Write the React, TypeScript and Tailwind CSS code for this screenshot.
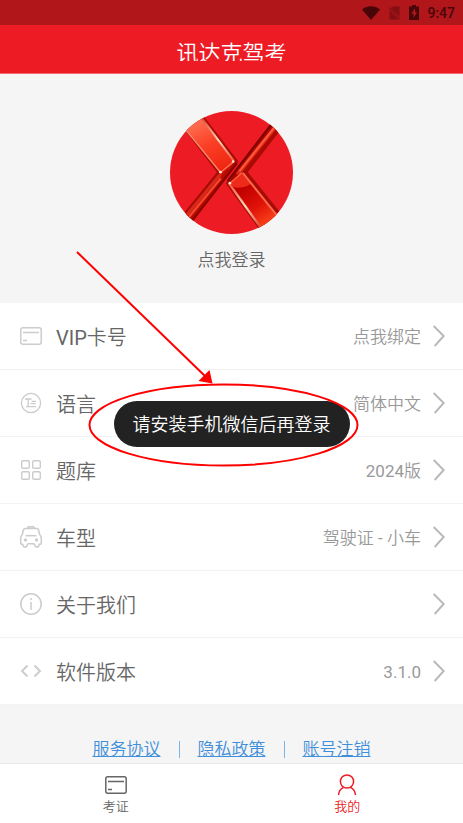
import type { ReactNode } from 'react'

const CardIcon = () => (
  <svg width="22" height="22" viewBox="0 0 22 22" fill="none" stroke="currentColor" strokeWidth="1.5">
    <rect x="0.8" y="2.8" width="20.4" height="16.4" rx="2" />
    <path d="M3 7.500h16M3 15.500h4" />
  </svg>
)

const LanguageIcon = () => (
  <svg width="22" height="22" viewBox="0 0 22 22" fill="none" stroke="currentColor" strokeWidth="1.3">
    <circle cx="11" cy="11" r="9.6" />
    <path d="M5 7h6.500M8.200 7v7M11.500 9.300h4.500M10.500 11.700h5M6 14.700h10" />
  </svg>
)

const GridIcon = () => (
  <svg width="22" height="22" viewBox="0 0 22 22" fill="none" stroke="currentColor" strokeWidth="1.4">
    <rect x="1.7" y="1.7" width="7.6" height="7.6" rx="1.3" />
    <rect x="12.7" y="1.7" width="7.6" height="7.6" rx="1.3" />
    <rect x="1.7" y="12.7" width="7.6" height="7.6" rx="1.3" />
    <rect x="12.7" y="12.7" width="7.6" height="7.6" rx="1.3" />
  </svg>
)

const CarIcon = () => (
  <svg width="22" height="22" viewBox="0 0 22 22" fill="none" stroke="currentColor" strokeWidth="1.5" strokeLinejoin="round">
    <path d="M7.300 2.500L8.300 0.800h5.400l1 1.700h1.800c1.200 0 1.800.500 2.100 1.500l1.100 4.500c1.100 1.200 1.600 2.500 1.600 4v4.800c0 .600-.400 1-1.200 1h-.900c-.200 1.800-.900 2.800-2.200 2.800s-2-.900-2.300-2.300l-.700-1H8l-.700 1c-.300 1.400-1 2.300-2.300 2.300s-2-1-2.200-2.800H1.900c-.800 0-1.200-.400-1.200-1v-4.800c0-1.500.500-2.800 1.600-4L3.400 4c.300-1 .900-1.500 2.100-1.500h11" />
    <path d="M5.500 9.700h11" />
    <circle cx="5.500" cy="14" r="0.900" fill="currentColor" />
    <circle cx="16.500" cy="14" r="0.900" fill="currentColor" />
  </svg>
)

const InfoIcon = () => (
  <svg width="22" height="22" viewBox="0 0 22 22" fill="none" stroke="currentColor" strokeWidth="1.5">
    <circle cx="11" cy="11" r="10.2" />
    <path d="M11 9v8M11 5v2" />
  </svg>
)

const CodeIcon = () => (
  <svg width="22" height="22" viewBox="0 0 22 22" fill="none" stroke="currentColor" strokeWidth="1.9">
    <path d="M7.500 5.500L2 11l5.500 5.500M14.500 5.500L20 11l-5.500 5.500" />
  </svg>
)

const UserIcon = () => (
  <svg width="22" height="22" viewBox="0 0 22 22" fill="none" stroke="currentColor" strokeWidth="1.5">
    <circle cx="11" cy="7.500" r="6.600" />
    <path d="M2.500 21c.3-3.500 2-6 5-7.600M19.500 21c-.3-3.500-2-6-5-7.600" />
  </svg>
)

const Chevron = () => (
  <svg width="12" height="22" viewBox="0 0 12 22" fill="none" stroke="#b8b8b8" strokeWidth="1.9">
    <path d="M0.700 1L10.700 11 1.700 21" />
  </svg>
)

const Logo = () => (
  <svg className="size-[123px] rounded-full" viewBox="29 31 370 370">
    <defs>
      <linearGradient id="upper" gradientUnits="userSpaceOnUse" x1="120" y1="60" x2="190" y2="210">
        <stop offset="0" stopColor="#ff6d50" />
        <stop offset="0.45" stopColor="#fa4026" />
        <stop offset="1" stopColor="#ef2410" />
      </linearGradient>
      <linearGradient id="lower" gradientUnits="userSpaceOnUse" x1="245" y1="265" x2="325" y2="380">
        <stop offset="0" stopColor="#c00000" />
        <stop offset="0.5" stopColor="#e01208" />
        <stop offset="1" stopColor="#ff4a1c" />
      </linearGradient>
      <linearGradient id="shine" gradientUnits="userSpaceOnUse" x1="0" y1="50" x2="0" y2="185">
        <stop offset="0" stopColor="#d73a20" />
        <stop offset="0.5" stopColor="#ffd6bd" />
        <stop offset="1" stopColor="#f4553a" />
      </linearGradient>
      <linearGradient id="shineLow" gradientUnits="userSpaceOnUse" x1="0" y1="250" x2="0" y2="385">
        <stop offset="0" stopColor="#f4553a" />
        <stop offset="0.5" stopColor="#ffd6bd" />
        <stop offset="1" stopColor="#d73a20" />
      </linearGradient>
    </defs>
    <rect x="29" y="31" width="370" height="370" fill="#ed1c24" />
    <g fill="none">
      {/* upper arm with its lower left leg */}
      <path d="M64 76L118 30 235 183 88 372 62 348 170 215Z" fill="#a80c05" />
      <path d="M74 82L121 46 222 182 181 218Z" fill="url(#upper)" />
      <path d="M180 218L222 182 205 212 84 362 68 350Z" fill="#c81208" />
      <path d="M180 222L72 354" stroke="#d8281a" strokeWidth="10" />
      <path d="M206 208L84 360" stroke="#b80c04" strokeWidth="10" />
      <path d="M182 234L78 360" stroke="#f84a2e" strokeWidth="6" />
      <path d="M230 188L90 368" stroke="#8e0500" strokeWidth="7" />
      <path d="M70 80L181 216" stroke="#ff8a6a" strokeWidth="4" />
      <path d="M117 42L221 181" stroke="url(#shine)" strokeWidth="6" />
      <path d="M181 216L220 184" stroke="#ff7255" strokeWidth="4" />

      {/* lower arm with its upper right leg */}
      <path d="M197 249L338 62 366 82 263 215 368 345 308 402Z" fill="#a80c05" />
      <path d="M207 248L246 216 356 354 308 392Z" fill="url(#lower)" />
      <path d="M209 247L246 216 273 250Q243 268 218 258Z" fill="#ee2a1a" />
      <path d="M212 243L338 76" stroke="#a80600" strokeWidth="8" />
      <path d="M232 222L347 78" stroke="#e02a1a" strokeWidth="12" />
      <path d="M238 212L345 78" stroke="#ff5a3c" strokeWidth="6" />
      <path d="M202 242L336 68" stroke="#7e0400" strokeWidth="6" />
      <path d="M250 214L358 80" stroke="#b00a03" strokeWidth="6" />
      <path d="M248 217L356 352" stroke="#ff694b" strokeWidth="6" />
      <path d="M206 248L306 388" stroke="url(#shineLow)" strokeWidth="7" />
      <path d="M209 248L246 217" stroke="#ff6044" strokeWidth="4" />
    </g>
    <g fill="#ffe9d9">
      <circle cx="181" cy="215" r="4" />
      <circle cx="219" cy="183" r="4" />
      <circle cx="209" cy="248" r="4" />
    </g>
  </svg>
)

const StatusBar = () => (
  <div className="flex h-[25px] items-center justify-end bg-[#b1161b] pr-2 text-[#480609]">
    <svg className="mr-2" width="18" height="14" viewBox="0 0 18 14" fill="currentColor">
      <path d="M9 14L0 3.500C5 -0.700 13 -0.700 18 3.500Z" />
    </svg>
    <svg className="mr-2 opacity-40" width="13" height="14" viewBox="0 0 13 14">
      <path d="M4.500 0.500H11.500V11L2.500 2.500ZM1.500 4L11 13.500H1.500Z" fill="currentColor" />
      <path d="M0.500 1.500L12.500 13.500" stroke="currentColor" />
    </svg>
    <svg className="mr-2" width="10" height="15" viewBox="0 0 10 15">
      <path d="M3 0h4v1.500h3V15H0V1.500h3Z" fill="currentColor" />
      <path d="M6 3L2.300 8.700h2.200V13L8 7.300H6Z" fill="#b1161b" />
    </svg>
    <span className="text-sm font-medium">9:47</span>
  </div>
)

type Row = { icon: ReactNode; label: string; value?: string }

const rows: Row[] = [
  { icon: <CardIcon />, label: 'VIP卡号', value: '点我绑定' },
  { icon: <LanguageIcon />, label: '语言', value: '简体中文' },
  { icon: <GridIcon />, label: '题库', value: '2024版' },
  { icon: <CarIcon />, label: '车型', value: '驾驶证 - 小车' },
  { icon: <InfoIcon />, label: '关于我们' },
  { icon: <CodeIcon />, label: '软件版本', value: '3.1.0' },
]

const links = ['服务协议', '隐私政策', '账号注销']

// Red ellipse around the toast and the arrow that points at it
const Callout = () => (
  <svg
    className="pointer-events-none absolute top-[250px] left-1/2 -ml-[157px]"
    width="290"
    height="220"
    viewBox="75 250 290 220"
    fill="none"
    stroke="#ff0000"
    strokeWidth="2"
  >
    <ellipse cx="223.500" cy="425" rx="134" ry="40.500" />
    <path d="M77 252L206 377" />
    <path d="M212.500 383.500L209.500 370 198.500 381Z" fill="#ff0000" stroke="none" />
  </svg>
)

export default function App() {
  return (
    <div className="relative flex min-h-screen flex-col bg-[#f5f5f5] font-[Roboto,'Noto_Sans_CJK_SC_DemiLight','Noto_Sans_CJK_SC',sans-serif] text-[#666]">
      <StatusBar />
      <header className="h-[49px] border-b border-[#f4696e] bg-[#ed1c24] pt-3">
        <h1 className="h-6 overflow-hidden text-center text-[22px] leading-[34px] text-white">讯达克驾考</h1>
      </header>

      <main className="flex-1">
        <section className="flex h-[229px] flex-col items-center pt-[37px]">
          <Logo />
          <button className="mt-3 text-[17px] leading-7">点我登录</button>
        </section>

        <ul className="bg-white">
          {rows.map((row) => (
            <li key={row.label} className="border-b border-[#f3f3f3]">
              <button className="flex h-[66px] w-full items-center pr-[18px] pl-5 text-left">
                <span className="text-[#ccc]">{row.icon}</span>
                <span className="ml-3.5 flex-1 pt-1 text-xl">{row.label}</span>
                <span className="mr-3 pt-[3px] text-[17px] text-[#999]">{row.value}</span>
                <Chevron />
              </button>
            </li>
          ))}
        </ul>

        <div className="flex items-center justify-center pt-8 pb-0.5 text-[17px] leading-6 text-[#3f8fda]">
          {links.map((link, index) => (
            <div key={link} className="flex items-center">
              {index > 0 && <span className="mx-[18px] h-[17px] w-px bg-[#7db4e6]" />}
              <a href="#" className="underline">{link}</a>
            </div>
          ))}
        </div>
      </main>

      <nav className="flex h-[60px] border-t border-[#e8e8e8] bg-white text-[13px] leading-[22px]">
        <button className="flex flex-1 flex-col items-center pt-2.5">
          <CardIcon />
          <span>考证</span>
        </button>
        <button className="flex flex-1 flex-col items-center pt-2.5 text-[#ed1c24]">
          <UserIcon />
          <span>我的</span>
        </button>
      </nav>

      <div role="status" className="absolute top-[401px] left-1/2 -translate-x-1/2 rounded-full bg-[#222] px-[19px] pt-[9px] pb-[7px] text-lg leading-[30px] whitespace-nowrap text-white">
        请安装手机微信后再登录
      </div>
      <Callout />
    </div>
  )
}
